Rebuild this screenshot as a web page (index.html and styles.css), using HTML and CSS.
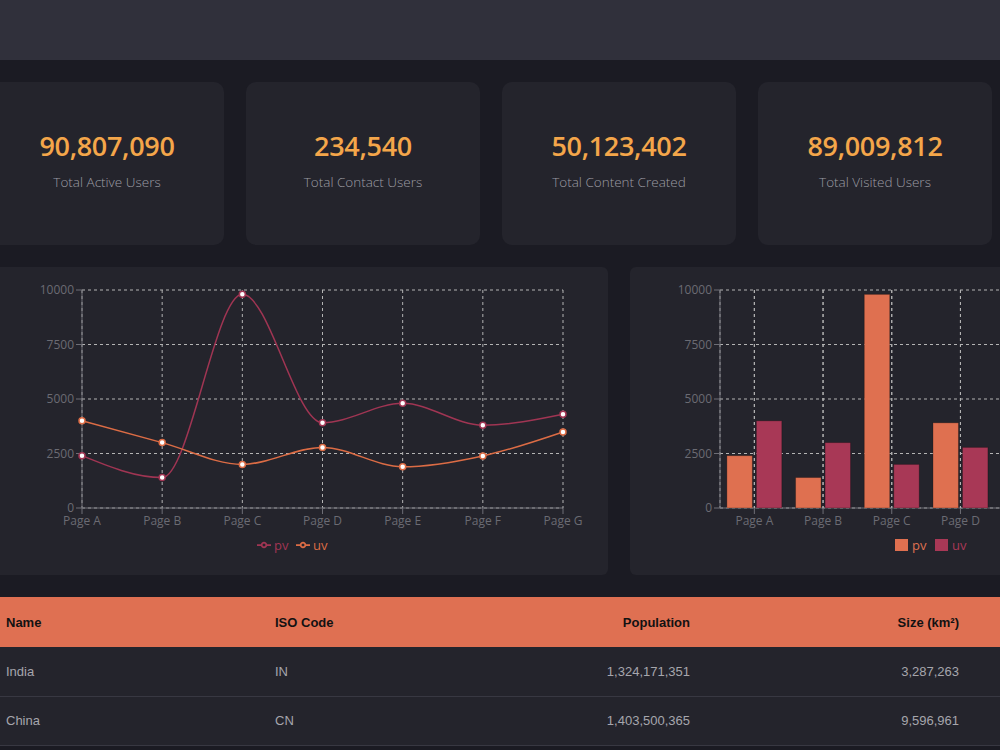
FILE: index.html
```html
<!DOCTYPE html>
<html lang="en">
<head>
    <meta charset="UTF-8">
    <meta name="viewport" content="width=device-width, initial-scale=1.0">
    <title>Dashboard</title>
    <link rel="stylesheet" href="styles.css">
</head>
<body>
<header class="topbar"></header>

<div class="page">

    <div class="stats">
        <div class="stat-card">
            <div class="stat-value">90,807,090</div>
            <div class="stat-label">Total Active Users</div>
        </div>
        <div class="stat-card">
            <div class="stat-value">234,540</div>
            <div class="stat-label">Total Contact Users</div>
        </div>
        <div class="stat-card">
            <div class="stat-value">50,123,402</div>
            <div class="stat-label">Total Content Created</div>
        </div>
        <div class="stat-card">
            <div class="stat-value">89,009,812</div>
            <div class="stat-label">Total Visited Users</div>
        </div>
    </div>

    <div class="charts">
        <div class="chart-card">
            <svg id="line-chart" class="chart" width="618" height="308"></svg>
        </div>
        <div class="chart-card">
            <svg id="bar-chart" class="chart" width="618" height="308"></svg>
        </div>
    </div>

    <table class="countries">
        <colgroup>
            <col class="col-name">
            <col class="col-iso">
            <col class="col-pop">
            <col class="col-size">
            <col>
        </colgroup>
        <thead>
        <tr>
            <th>Name</th>
            <th>ISO Code</th>
            <th class="num">Population</th>
            <th class="num">Size (km²)</th>
            <th></th>
        </tr>
        </thead>
        <tbody>
        <tr>
            <td>India</td>
            <td>IN</td>
            <td class="num">1,324,171,351</td>
            <td class="num">3,287,263</td>
            <td></td>
        </tr>
        <tr>
            <td>China</td>
            <td>CN</td>
            <td class="num">1,403,500,365</td>
            <td class="num">9,596,961</td>
            <td></td>
        </tr>
        </tbody>
    </table>

</div>

<script>
    // page views / unique visitors per page
    const data = [
        {name: 'Page A', pv: 2400, uv: 4000},
        {name: 'Page B', pv: 1398, uv: 3000},
        {name: 'Page C', pv: 9800, uv: 2000},
        {name: 'Page D', pv: 3908, uv: 2780},
        {name: 'Page E', pv: 4800, uv: 1890},
        {name: 'Page F', pv: 3800, uv: 2390},
        {name: 'Page G', pv: 4300, uv: 3490}
    ];

    const PV = '#a03553';
    const UV = '#dc6c45';
    const PV_BAR = '#df7050';
    const UV_BAR = '#a83856';

    const plotTop = 23, plotBottom = 241;
    const ticks = [0, 2500, 5000, 7500, 10000];

    function yOf(v) {
        return plotBottom - v / 10000 * (plotBottom - plotTop);
    }

    function sign(x) {
        return x < 0 ? -1 : 1;
    }

    // monotone cubic interpolation, same maths as d3 curveMonotoneX
    function monotonePath(pts) {
        const n = pts.length;
        const m = [];
        for (let i = 1; i < n - 1; i++) {
            const h0 = pts[i][0] - pts[i - 1][0];
            const h1 = pts[i + 1][0] - pts[i][0];
            const s0 = (pts[i][1] - pts[i - 1][1]) / h0;
            const s1 = (pts[i + 1][1] - pts[i][1]) / h1;
            const p = (s0 * h1 + s1 * h0) / (h0 + h1);
            m[i] = (sign(s0) + sign(s1)) * Math.min(Math.abs(s0), Math.abs(s1), 0.5 * Math.abs(p)) || 0;
        }
        m[0] = (3 * (pts[1][1] - pts[0][1]) / (pts[1][0] - pts[0][0]) - m[1]) / 2;
        m[n - 1] = (3 * (pts[n - 1][1] - pts[n - 2][1]) / (pts[n - 1][0] - pts[n - 2][0]) - m[n - 2]) / 2;

        let d = 'M' + pts[0][0] + ',' + pts[0][1];
        for (let i = 0; i < n - 1; i++) {
            const dx = (pts[i + 1][0] - pts[i][0]) / 3;
            d += 'C' + (pts[i][0] + dx) + ',' + (pts[i][1] + dx * m[i]) + ' ' +
                (pts[i + 1][0] - dx) + ',' + (pts[i + 1][1] - dx * m[i + 1]) + ' ' +
                pts[i + 1][0] + ',' + pts[i + 1][1];
        }
        return d;
    }

    // grid, axes and tick labels shared by both charts
    function axes(left, right, xs) {
        let s = '';
        ticks.forEach(function (t) {
            const y = yOf(t);
            s += `<line class="grid" x1="${left}" y1="${y}" x2="${right}" y2="${y}"/>`;
        });
        xs.forEach(function (x) {
            s += `<line class="grid" x1="${x}" y1="${plotTop}" x2="${x}" y2="${plotBottom}"/>`;
        });
        s += `<line class="axis" x1="${left}" y1="${plotTop}" x2="${left}" y2="${plotBottom}"/>`;
        s += `<line class="axis" x1="${left}" y1="${plotBottom}" x2="${right}" y2="${plotBottom}"/>`;
        ticks.forEach(function (t) {
            const y = yOf(t);
            s += `<line class="axis" x1="${left - 6}" y1="${y}" x2="${left}" y2="${y}"/>`;
            s += `<text class="tick" x="${left - 8}" y="${y + 4}" text-anchor="end">${t}</text>`;
        });
        return s;
    }

    function xLabels(centers) {
        let s = '';
        centers.forEach(function (x, i) {
            s += `<line class="axis" x1="${x}" y1="${plotBottom}" x2="${x}" y2="${plotBottom + 6}"/>`;
            s += `<text class="tick" x="${x}" y="${plotBottom + 17}" text-anchor="middle">${data[i].name}</text>`;
        });
        return s;
    }

    function lineIcon(x, y, color) {
        return `<svg x="${x}" y="${y}" width="14" height="14" viewBox="0 0 32 32">
            <path fill="none" stroke="${color}" stroke-width="4"
                  d="M0,16h10.67A5.33,5.33,0,1,1,21.33,16H32M21.33,16A5.33,5.33,0,1,1,10.67,16"/></svg>`;
    }

    function drawLineChart() {
        const left = 92, right = 573;
        const step = (right - left) / (data.length - 1);
        const xs = data.map(function (d, i) { return left + i * step; });

        let s = axes(left, right, xs);
        s += xLabels(xs);

        [['pv', PV], ['uv', UV]].forEach(function (k) {
            const pts = data.map(function (d, i) { return [xs[i], yOf(d[k[0]])]; });
            s += `<path class="series" stroke="${k[1]}" d="${monotonePath(pts)}"/>`;
            pts.forEach(function (p) {
                s += `<circle class="dot" cx="${p[0]}" cy="${p[1]}" r="3" stroke="${k[1]}"/>`;
            });
        });

        s += lineIcon(267, 271, PV);
        s += `<text class="legend" x="284" y="283" fill="${PV}">pv</text>`;
        s += lineIcon(306, 271, UV);
        s += `<text class="legend" x="323" y="283" fill="${UV}">uv</text>`;

        document.getElementById('line-chart').innerHTML = s;
    }

    function drawBarChart() {
        const left = 90, band = 68.7;
        const right = left + band * data.length;
        const centers = data.map(function (d, i) { return left + band * i + band / 2; });

        let s = axes(left, right, [left].concat(centers));

        const pad = band * 0.1, gap = 4;
        const w = (band - pad * 2 - gap) / 2;
        data.forEach(function (d, i) {
            const x0 = left + band * i + pad;
            s += `<rect class="bar" x="${x0}" y="${yOf(d.pv)}" width="${w}" height="${plotBottom - yOf(d.pv)}" fill="${PV_BAR}"/>`;
            s += `<rect class="bar" x="${x0 + w + gap}" y="${yOf(d.uv)}" width="${w}" height="${plotBottom - yOf(d.uv)}" fill="${UV_BAR}"/>`;
        });

        // grid lines stay visible above the bars
        centers.forEach(function (x) {
            s += `<line class="grid" x1="${x}" y1="${plotTop}" x2="${x}" y2="${plotBottom}"/>`;
        });
        s += xLabels(centers);

        s += `<rect x="265" y="272" width="13" height="12" fill="${PV_BAR}"/>`;
        s += `<text class="legend" x="282" y="283" fill="${PV_BAR}">pv</text>`;
        s += `<rect x="305" y="272" width="13" height="12" fill="${UV_BAR}"/>`;
        s += `<text class="legend" x="322" y="283" fill="${UV_BAR}">uv</text>`;

        document.getElementById('bar-chart').innerHTML = s;
    }

    drawLineChart();
    drawBarChart();
</script>

</body>
</html>
```

FILE: styles.css
```css
html,
body {
    overflow: hidden;
}

body {
    margin: 0;
    padding: 0;
    background-color: #1b1b23;
    font-family: "Open Sans", "Noto Sans", sans-serif;
}

.topbar {
    height: 60px;
    background-color: #30303b;
}

.page {
    width: 1258px;
    margin-left: -10px;
    padding-top: 22px;
    display: flex;
    flex-direction: column;
    gap: 22px;
}

/* stat cards */

.stats {
    display: grid;
    grid-template-columns: repeat(4, 234px);
    gap: 22px;
}

.stat-card {
    height: 163px;
    box-sizing: border-box;
    padding-bottom: 8px;
    background-color: #24242c;
    border-radius: 10px;
    display: flex;
    flex-direction: column;
    align-items: center;
    justify-content: center;
}

.stat-value {
    font-size: 27px;
    font-weight: 600;
    line-height: 36px;
    letter-spacing: -0.3px;
    color: #f4a64a;
}

.stat-label {
    margin-top: 8px;
    font-size: 13.5px;
    font-weight: 300;
    line-height: 20px;
    color: #9c9ca3;
}

/* charts */

.charts {
    display: grid;
    grid-template-columns: 618px 618px;
    gap: 22px;
}

.chart-card {
    height: 308px;
    background-color: #24242c;
    border-radius: 6px;
}

.chart {
    display: block;
}

.chart .grid {
    stroke: #b4b4b4;
    stroke-width: 1;
    stroke-dasharray: 3 3;
}

.chart .axis {
    stroke: #6e6e76;
    stroke-width: 1;
}

.chart .tick {
    font-size: 12px;
    fill: #6b6b73;
}

.chart .series {
    fill: none;
    stroke-width: 1.5;
}

.chart .dot {
    fill: #ffffff;
    stroke-width: 1.5;
}

.chart .bar {
    stroke: rgba(0, 0, 0, 0.25);
    stroke-width: 1;
}

.chart .legend {
    font-size: 13px;
}

/* countries table */

.countries {
    width: 1258px;
    border-collapse: collapse;
    table-layout: fixed;
    font-family: "Liberation Sans", Arial, sans-serif;
    font-size: 13px;
}

.col-name,
.col-iso {
    width: 269px;
}

.col-pop {
    width: 178px;
}

.col-size {
    width: 269px;
}

.countries th,
.countries td {
    padding: 0 16px;
    text-align: left;
}

.countries th.num,
.countries td.num {
    text-align: right;
}

.countries thead tr {
    height: 50px;
    background-color: #df7052;
}

.countries th {
    color: #121212;
    font-weight: bold;
}

.countries tbody tr {
    height: 49px;
    background-color: #24242c;
    border-bottom: 1px solid #383842;
}

.countries td {
    color: #a6a6ac;
}
```
